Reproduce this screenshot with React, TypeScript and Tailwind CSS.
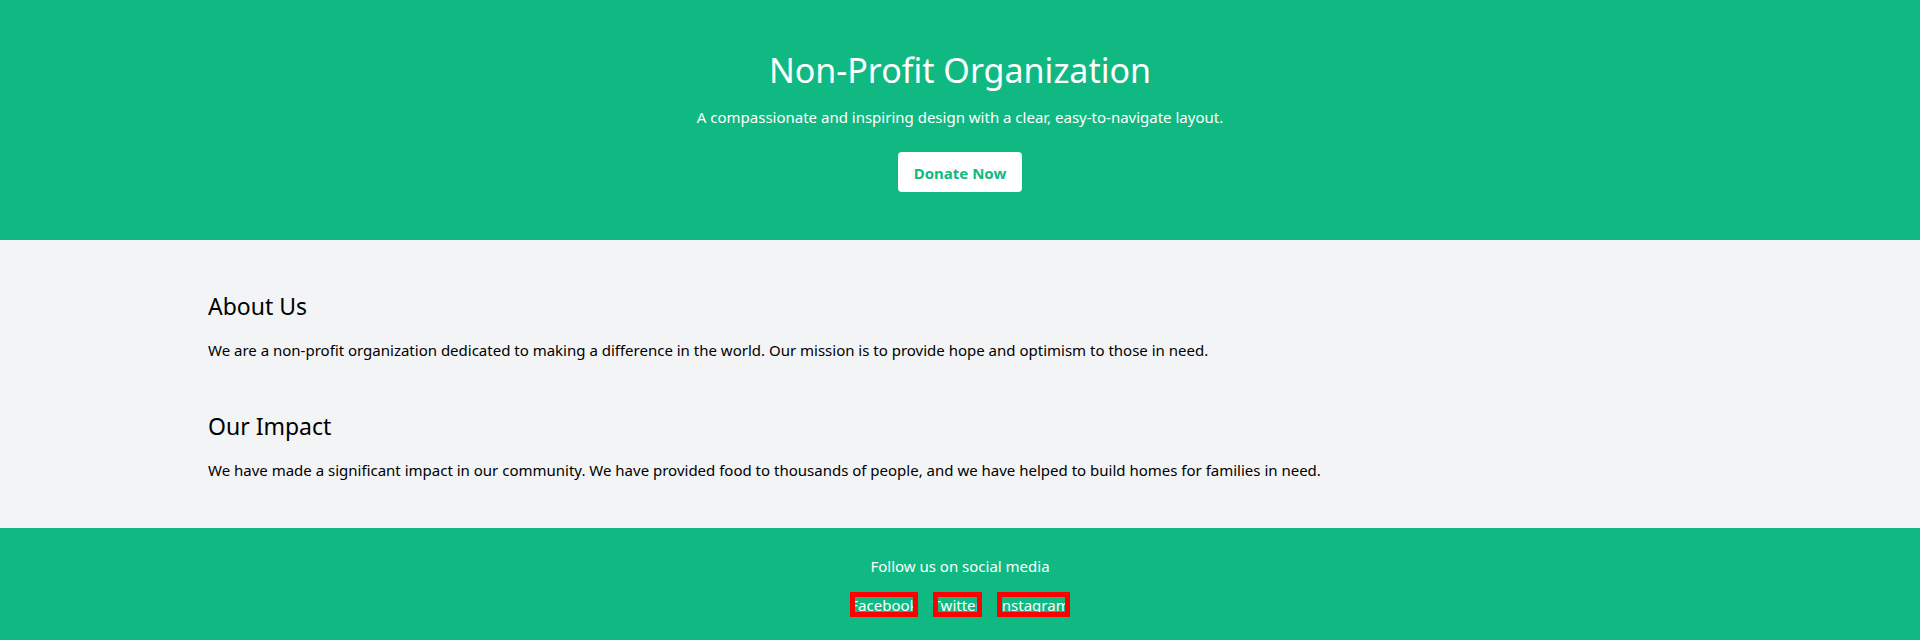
const links = ["Facebook", "Twitter", "Instagram"];

const sections = [
  {
    title: "About Us",
    text: "We are a non-profit organization dedicated to making a difference in the world. Our mission is to provide hope and optimism to those in need.",
  },
  {
    title: "Our Impact",
    text: "We have made a significant impact in our community. We have provided food to thousands of people, and we have helped to build homes for families in need.",
  },
];

export default function App() {
  return (
    <div className="bg-gray-100 font-['Noto_Sans',sans-serif] text-[15px] leading-6 text-black">
      <header className="bg-[#10b981] pt-[50px] pb-12 text-center text-white">
        <h1 className="mb-[15px] text-[34px] leading-10">Non-Profit Organization</h1>
        <p className="mb-[23px]">A compassionate and inspiring design with a clear, easy-to-navigate layout.</p>
        <button type="button" className="rounded bg-white px-4 pt-[9px] pb-[7px] font-bold text-[#10b981]">
          Donate Now
        </button>
      </header>
      <main className="mx-auto max-w-[1536px] px-4 pt-[50px] pb-[46px]">
        {sections.map((s) => (
          <section key={s.title} className="mb-12 last:mb-0">
            <h2 className="mb-4 text-[23px] leading-8">{s.title}</h2>
            <p>{s.text}</p>
          </section>
        ))}
      </main>
      <footer className="bg-[#10b981] pt-[26px] pb-[23px] text-center text-white">
        <p className="mb-[14px]">Follow us on social media</p>
        <nav className="flex justify-center gap-[15px]">
          {links.map((l) => (
            <a key={l} href="#" className="pt-px outline-[5px] -outline-offset-5 outline-[#ff0000]">
              {l}
            </a>
          ))}
        </nav>
      </footer>
    </div>
  );
}
